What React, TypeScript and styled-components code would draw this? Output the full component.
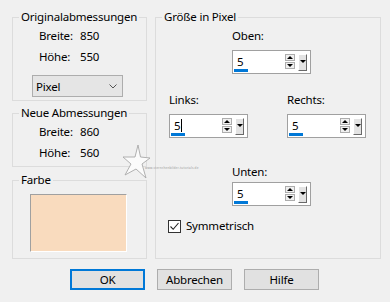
import styled, { createGlobalStyle } from 'styled-components'

const GlobalStyle = createGlobalStyle`
  html, body {
    margin: 0;
    padding: 0;
    background: #f0f0f0;
  }
  body {
    font-family: 'Noto Sans', 'Open Sans', sans-serif;
    font-size: 11.5px;
    letter-spacing: -0.2px;
    color: #000;
  }
`

const Window = styled.div`
  position: relative;
  width: 390px;
  height: 302px;
  box-sizing: border-box;
  padding: 9px 0 0 12px;
  background: #f0f0f0;
  overflow: hidden;
`

const Columns = styled.div`
  display: grid;
  grid-template-columns: 135px 226px;
  column-gap: 8px;
`

const LeftCol = styled.div`
  display: flex;
  flex-direction: column;
`

const Group = styled.fieldset<{ $h: number; $mt?: number }>`
  box-sizing: border-box;
  height: ${(p) => p.$h}px;
  margin: ${(p) => p.$mt ?? 0}px 0 0 0;
  padding: 0;
  min-width: 0;
  border: 1px solid #dcdcdc;
`

const Legend = styled.legend`
  margin-left: 6px;
  padding: 0 2px;
  line-height: 16px;
`

const DimGrid = styled.div`
  display: grid;
  grid-template-columns: 41px auto;
  grid-auto-rows: 21px;
  align-items: center;
  padding-left: 26px;
`

const Select = styled.div`
  display: flex;
  align-items: center;
  justify-content: space-between;
  box-sizing: border-box;
  width: 91px;
  height: 22px;
  margin: 8px 0 0 19px;
  padding: 0 5px 0 3px;
  background: #e5e5e5;
  border: 1px solid #adadad;
`

const ColorBox = styled.div`
  box-sizing: border-box;
  width: 97px;
  height: 58px;
  margin: 6px 0 0 17px;
  background: #f9dbbe;
  border-top: 1px solid #a0a0a0;
  border-left: 1px solid #a0a0a0;
  border-right: 1px solid #ffffff;
  border-bottom: 1px solid #ffffff;
`

const SizeBody = styled.div`
  display: flex;
  flex-direction: column;
`

const Field = styled.div<{ $ml: number; $mt: number; $gap: number }>`
  display: flex;
  flex-direction: column;
  gap: ${(p) => p.$gap}px;
  margin: ${(p) => p.$mt}px 0 0 ${(p) => p.$ml}px;
`

const FieldLabel = styled.span`
  line-height: 16px;
`

const SideRow = styled.div`
  display: flex;
  align-items: flex-start;
`

const SpinBox = styled.div`
  position: relative;
  display: flex;
  align-items: flex-start;
  box-sizing: border-box;
  width: 79px;
  height: 24px;
  padding: 2px 3px 2px 4px;
  background: #fff;
  border: 1px solid #a0a0a0;
`

const SpinValue = styled.span`
  flex: 1;
  line-height: 18px;
`

const Caret = styled.span`
  display: inline-block;
  width: 1px;
  height: 13px;
  margin-left: 1px;
  vertical-align: -2px;
  background: #000;
`

const FocusBar = styled.span`
  position: absolute;
  left: 1px;
  bottom: 1px;
  width: 14px;
  height: 3px;
  background: #0078d7;
`

const Arrows = styled.div`
  display: flex;
  flex-direction: column;
  gap: 1px;
  margin-top: 1px;
  margin-right: 3px;
`

const ArrowBtn = styled.div<{ $down?: boolean }>`
  display: flex;
  align-items: center;
  justify-content: center;
  box-sizing: border-box;
  width: 10px;
  height: 7px;
  background: #f0f0f0;
  border: 1px solid #adadad;
  &::after {
    content: '';
    border-left: 3px solid transparent;
    border-right: 3px solid transparent;
    ${(p) => (p.$down ? 'border-top: 3px solid #000;' : 'border-bottom: 3px solid #000;')}
  }
`

const DropBtn = styled.div`
  display: flex;
  align-items: center;
  justify-content: center;
  box-sizing: border-box;
  width: 9px;
  height: 17px;
  margin-top: 1px;
  background: #e3e3e3;
  border-top: 1px solid #fff;
  border-left: 1px solid #fff;
  border-right: 1px solid #696969;
  border-bottom: 1px solid #696969;
  &::after {
    content: '';
    margin-top: -2px;
    border-left: 3px solid transparent;
    border-right: 3px solid transparent;
    border-top: 3px solid #000;
  }
`

const CheckRow = styled.label`
  display: flex;
  align-items: center;
  gap: 5px;
  margin: 12px 0 0 12px;
  line-height: 16px;
`

const CheckMark = styled.span`
  display: flex;
  align-items: center;
  justify-content: center;
  box-sizing: border-box;
  width: 13px;
  height: 13px;
  background: #fff;
  border: 1px solid #333;
`

const ButtonRow = styled.div`
  display: flex;
  gap: 12px;
  margin: 10px 0 0 58px;
`

const Button = styled.div<{ $primary?: boolean }>`
  display: flex;
  align-items: center;
  justify-content: center;
  box-sizing: border-box;
  width: 75px;
  height: 21px;
  background: #e1e1e1;
  border: ${(p) => (p.$primary ? '2px solid #0078d7' : '1px solid #adadad')};
`

const Watermark = styled.div`
  position: absolute;
  left: 121px;
  top: 144px;
  display: flex;
  align-items: flex-end;
  pointer-events: none;
`

const WatermarkText = styled.span`
  margin: 0 0 10px -6px;
  font-size: 3px;
  line-height: 3px;
  color: #9a9a9a;
  letter-spacing: 0.2px;
`

const Spinner = ({ value, caret }: { value: string; caret?: boolean }) => (
  <SpinBox>
    <SpinValue>
      {value}
      {caret && <Caret />}
    </SpinValue>
    <Arrows>
      <ArrowBtn />
      <ArrowBtn $down />
    </Arrows>
    <DropBtn />
    <FocusBar />
  </SpinBox>
)

const Dim = ({ w, h }: { w: string; h: string }) => (
  <DimGrid>
    <span>Breite:</span>
    <span>{w}</span>
    <span>Höhe:</span>
    <span>{h}</span>
  </DimGrid>
)

export default function App() {
  return (
    <Window>
      <GlobalStyle />
      <Columns>
        <LeftCol>
          <Group $h={92}>
            <Legend>Originalabmessungen</Legend>
            <Dim w='850' h='550' />
            <Select>
              <span>Pixel</span>
              <svg width='8' height='5' viewBox='0 0 8 5'>
                <path d='M0.5 0.5 L4 4 L7.5 0.5' fill='none' stroke='#555' strokeWidth='1' />
              </svg>
            </Select>
          </Group>
          <Group $h={62} $mt={4}>
            <Legend>Neue Abmessungen</Legend>
            <Dim w='860' h='560' />
          </Group>
          <Group $h={87} $mt={5}>
            <Legend>Farbe</Legend>
            <ColorBox />
          </Group>
        </LeftCol>
        <Group $h={250}>
          <Legend>Größe in Pixel</Legend>
          <SizeBody>
            <Field $ml={76} $mt={3} $gap={6}>
              <FieldLabel>Oben:</FieldLabel>
              <Spinner value='5' />
            </Field>
            <SideRow>
              <Field $ml={13} $mt={18} $gap={6}>
                <FieldLabel>Links:</FieldLabel>
                <Spinner value='5' caret />
              </Field>
              <Field $ml={39} $mt={18} $gap={6}>
                <FieldLabel>Rechts:</FieldLabel>
                <Spinner value='5' />
              </Field>
            </SideRow>
            <Field $ml={76} $mt={26} $gap={2}>
              <FieldLabel>Unten:</FieldLabel>
              <Spinner value='5' />
            </Field>
            <CheckRow>
              <CheckMark>
                <svg width='11' height='11' viewBox='0 0 11 11'>
                  <path d='M1.5 5.5 L4.2 8.3 L9.5 2' fill='none' stroke='#222' strokeWidth='1.1' />
                </svg>
              </CheckMark>
              Symmetrisch
            </CheckRow>
          </SizeBody>
        </Group>
      </Columns>
      <ButtonRow>
        <Button $primary>OK</Button>
        <Button>Abbrechen</Button>
        <Button>Hilfe</Button>
      </ButtonRow>
      <Watermark>
        <svg width='30' height='36' viewBox='0 0 30 36'>
          <path
            d='M17 1 L19.5 13 L29 14 L21 20 L25 34 L15 25 L4 31 L10 20 L2 13 L14 13 Z'
            fill='#fbfbfb'
            stroke='#a8a8a8'
            strokeWidth='0.9'
          />
        </svg>
        <WatermarkText>www.sternchenbilder-tutorials.de</WatermarkText>
      </Watermark>
    </Window>
  )
}
